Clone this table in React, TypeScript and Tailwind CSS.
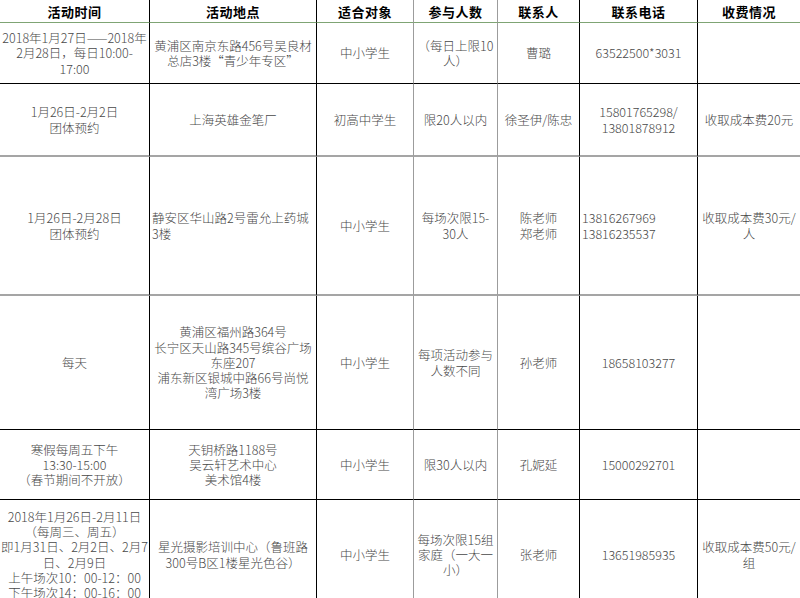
import React from "react";

type Cell = { lines: string[]; left?: boolean };
type Row = { bottom: string; cells: Cell[] };

const colRight = [
  "border-r border-r-black",
  "border-r border-r-black",
  "border-r border-r-[#9c9c9c]",
  "border-r border-r-[#9c9c9c]",
  "border-r border-r-black",
  "border-r border-r-black",
  "",
];

const c = (...lines: string[]): Cell => ({ lines });
const l = (...lines: string[]): Cell => ({ lines, left: true });

const header = ["活动时间", "活动地点", "适合对象", "参与人数", "联系人", "联系电话", "收费情况"];

const rows: Row[] = [
  {
    bottom: "border-b border-b-black",
    cells: [
      c("2018年1月27日——2018年", "2月28日，每日10:00-", "17:00"),
      c("黄浦区南京东路456号吴良材", "总店3楼“青少年专区”"),
      c("中小学生"),
      c("（每日上限10", "人）"),
      c("曹璐"),
      c("63522500*3031"),
      c(),
    ],
  },
  {
    bottom: "border-b-2 border-b-[#a5a5a5]",
    cells: [
      c("1月26日-2月2日", "团体预约"),
      c("上海英雄金笔厂"),
      c("初高中学生"),
      c("限20人以内"),
      c("徐圣伊/陈忠"),
      c("15801765298/", "13801878912"),
      c("收取成本费20元"),
    ],
  },
  {
    bottom: "border-b-2 border-b-[#a5a5a5]",
    cells: [
      c("1月26日-2月28日", "团体预约"),
      l("静安区华山路2号雷允上药城", "3楼"),
      c("中小学生"),
      c("每场次限15-", "30人"),
      c("陈老师", "郑老师"),
      l("13816267969", "13816235537"),
      c("收取成本费30元/", "人"),
    ],
  },
  {
    bottom: "border-b border-b-black",
    cells: [
      c("每天"),
      c("黄浦区福州路364号", "长宁区天山路345号缤谷广场", "东座207", "浦东新区银城中路66号尚悦", "湾广场3楼"),
      c("中小学生"),
      c("每项活动参与", "人数不同"),
      c("孙老师"),
      c("18658103277"),
      c(),
    ],
  },
  {
    bottom: "border-b border-b-black",
    cells: [
      c("寒假每周五下午", "13:30-15:00", "（春节期间不开放）"),
      c("天钥桥路1188号", "吴云轩艺术中心", "美术馆4楼"),
      c("中小学生"),
      c("限30人以内"),
      c("孔妮延"),
      c("15000292701"),
      c(),
    ],
  },
  {
    bottom: "border-b border-b-black",
    cells: [
      c(
        "2018年1月26日-2月11日",
        "（每周三、周五）",
        "即1月31日、2月2日、2月7",
        "日、2月9日",
        "上午场次10：00-12：00",
        "下午场次14：00-16：00"
      ),
      c("星光摄影培训中心（鲁班路", "300号B区1楼星光色谷）"),
      c("中小学生"),
      c("每场次限15组", "家庭（一大一", "小）"),
      c("张老师"),
      c("13651985935"),
      c("收取成本费50元/", "组"),
    ],
  },
];

export default function App() {
  return (
    <div
      className="w-[800px] h-[598px] overflow-hidden bg-white"
      style={{ fontFamily: '"Noto Sans CJK SC", "Liberation Sans", sans-serif' }}
    >
      <div className="grid grid-cols-[150px_167px_97px_84px_82px_118px_102px] grid-rows-[23px_61px_73px_139px_134px_70px_110px]">
        {header.map((h, i) => (
          <div
            key={"h" + i}
            className={
              "flex items-center justify-center border-b border-b-[#7fa474] text-[13px] font-bold text-black leading-none tracking-[0.5px] " +
              colRight[i]
            }
          >
            {h}
          </div>
        ))}
        {rows.map((row, ri) =>
          row.cells.map((cell, ci) => (
            <div
              key={ri + "-" + ci}
              className={
                "flex flex-col justify-center px-[2px] text-[12.5px] leading-[15.3px] font-light text-[#484848] " +
                (cell.left ? "items-start " : "items-center text-center ") +
                row.bottom +
                " " +
                colRight[ci]
              }
            >
              {cell.lines.map((t, k) => (
                <div key={k} className="whitespace-nowrap">
                  {t}
                </div>
              ))}
            </div>
          ))
        )}
      </div>
    </div>
  );
}
